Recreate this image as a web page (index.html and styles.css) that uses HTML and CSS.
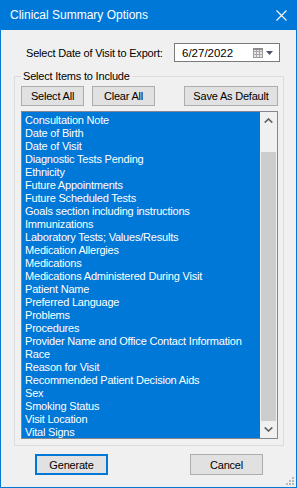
FILE: index.html
```html
<!DOCTYPE html>
<html lang="en">
  <head>
    <meta charset="UTF-8" />
    <title>Clinical Summary Options</title>
    <link rel="stylesheet" href="styles.css">
  </head>
  <body>
    <div class="dialog">
      <div class="titlebar">
        <span class="title">Clinical Summary Options</span>
        <svg class="close" width="11" height="11" viewBox="0 0 11 11">
          <path d="M0.5 0.5 L10.5 10.5 M10.5 0.5 L0.5 10.5" stroke="#fff" stroke-width="1.1" fill="none" />
        </svg>
      </div>

      <div class="content">
        <div class="date-row">
          <label for="visit-date">Select Date of Visit to Export:</label>
          <div class="date-box" id="visit-date">
            <span class="date-text">6/27/2022</span>
            <svg class="cal-icon" width="10" height="10" viewBox="0 0 10 10">
              <rect x="0.5" y="0.5" width="9" height="9" fill="#e8e8e8" stroke="#9a9a9a" />
              <path d="M0 3.5 H10 M0 6.5 H10 M3.5 1 V10 M6.5 1 V10" stroke="#a8a8a8" fill="none" />
              <rect x="0" y="0" width="10" height="2" fill="#8c8c8c" />
            </svg>
            <svg class="drop-arrow" width="7" height="4" viewBox="0 0 7 4">
              <path d="M0 0 H7 L3.5 4 Z" fill="#4c5466" />
            </svg>
          </div>
        </div>

        <fieldset class="group">
          <legend>Select Items to Include</legend>
          <div class="group-buttons">
            <button class="btn btn-small">Select All</button>
            <button class="btn btn-small">Clear All</button>
            <button class="btn btn-default">Save As Default</button>
          </div>

          <div class="listbox">
            <ul class="items">
              <li>Consultation Note</li>
              <li>Date of Birth</li>
              <li>Date of Visit</li>
              <li>Diagnostic Tests Pending</li>
              <li>Ethnicity</li>
              <li>Future Appointments</li>
              <li>Future Scheduled Tests</li>
              <li>Goals section including instructions</li>
              <li>Immunizations</li>
              <li>Laboratory Tests; Values/Results</li>
              <li>Medication Allergies</li>
              <li>Medications</li>
              <li>Medications Administered During Visit</li>
              <li>Patient Name</li>
              <li>Preferred Language</li>
              <li>Problems</li>
              <li>Procedures</li>
              <li>Provider Name and Office Contact Information</li>
              <li>Race</li>
              <li>Reason for Visit</li>
              <li>Recommended Patient Decision Aids</li>
              <li>Sex</li>
              <li>Smoking Status</li>
              <li>Visit Location</li>
              <li>Vital Signs</li>
            </ul>
            <div class="scrollbar">
              <div class="scroll-arrow">
                <svg width="9" height="5" viewBox="0 0 9 5">
                  <path d="M0.7 4.6 L4.5 1 L8.3 4.6" stroke="#606060" stroke-width="1.6" fill="none" />
                </svg>
              </div>
              <div class="scroll-track">
                <div class="scroll-thumb"></div>
              </div>
              <div class="scroll-arrow">
                <svg width="9" height="5" viewBox="0 0 9 5">
                  <path d="M0.7 0.4 L4.5 4 L8.3 0.4" stroke="#606060" stroke-width="1.6" fill="none" />
                </svg>
              </div>
            </div>
          </div>
        </fieldset>

        <div class="footer">
          <button class="btn btn-footer btn-focused">Generate</button>
          <button class="btn btn-footer">Cancel</button>
        </div>
      </div>

      <div class="grip">
        <span></span>
        <span></span><span></span>
        <span></span><span></span><span></span>
      </div>
    </div>
  </body>
</html>
```

FILE: styles.css
```css
html,
body {
  margin: 0;
  padding: 0;
  background: #f0f0f0;
}

body {
  font-family: "Liberation Sans", Arial, sans-serif;
  font-size: 11px;
  color: #000;
}

.dialog {
  position: relative;
  box-sizing: border-box;
  width: 297px;
  height: 488px;
  border: 1px solid #0078d7;
  border-top: none;
  background: #f0f0f0;
  display: flex;
  flex-direction: column;
}

.titlebar {
  height: 30px;
  flex: none;
  background: #0078d7;
  color: #fff;
  display: flex;
  align-items: center;
  justify-content: space-between;
  padding: 0 9px 0 9px;
}

.title {
  font-size: 12px;
}

.close {
  display: block;
}

.content {
  display: flex;
  flex-direction: column;
}

.date-row {
  display: flex;
  align-items: center;
  justify-content: space-between;
  padding: 13px 16px 0 25px;
  letter-spacing: -0.2px;
}

.date-box {
  box-sizing: border-box;
  width: 106px;
  height: 19px;
  background: #fff;
  border: 1px solid #7a7a7a;
  display: flex;
  align-items: center;
  padding: 0 6px 0 7px;
  letter-spacing: 0;
}

.date-text {
  font-size: 11.5px;
  flex: 1;
}

.cal-icon {
  display: block;
  margin-right: 3px;
}

.drop-arrow {
  display: block;
}

.group {
  box-sizing: border-box;
  width: 270px;
  margin: 8px 0 0 13px;
  padding: 3px 5px 6px 6px;
  border: 1px solid #dcdcdc;
  min-width: 0;
}

.group legend {
  padding: 0 2px;
  letter-spacing: -0.2px;
  line-height: 13px;
}

.group-buttons {
  display: flex;
}

.btn {
  box-sizing: border-box;
  height: 20px;
  margin: 0;
  padding: 0;
  background: #e1e1e1;
  border: 1px solid #adadad;
  font-family: "Liberation Sans", Arial, sans-serif;
  font-size: 11px;
  letter-spacing: -0.2px;
  color: #000;
}

.btn-small {
  width: 63px;
}

.btn-small + .btn-small {
  margin-left: 8px;
}

.btn-default {
  width: 94px;
  margin-left: auto;
}

.listbox {
  box-sizing: border-box;
  height: 328px;
  margin-top: 5px;
  border: 1px solid #828790;
  background: #fff;
  display: flex;
}

.items {
  flex: 1;
  list-style: none;
  margin: 0;
  padding: 2px 0 0 3px;
  overflow: hidden;
  background: #0078d7;
  color: #fff;
  letter-spacing: -0.2px;
}

.items li {
  height: 13px;
  line-height: 13px;
  white-space: nowrap;
}

.scrollbar {
  width: 17px;
  background: #f0f0f0;
  display: flex;
  flex-direction: column;
}

.scroll-arrow {
  height: 17px;
  display: flex;
  align-items: center;
  justify-content: center;
}

.scroll-track {
  flex: 1;
  display: flex;
  flex-direction: column;
  justify-content: flex-end;
}

.scroll-thumb {
  height: 269px;
  margin: 0 1px;
  background: #cdcdcd;
}

.footer {
  display: flex;
  justify-content: space-between;
  padding: 8px 33px 0 34px;
}

.btn-footer {
  width: 73px;
  height: 21px;
}

.btn-focused {
  border: 2px solid #0078d7;
}

.grip {
  position: absolute;
  right: 2px;
  bottom: 2px;
  width: 8px;
  height: 8px;
  display: grid;
  grid-template-columns: repeat(3, 2px);
  grid-template-rows: repeat(3, 2px);
  gap: 1px;
}

.grip span {
  background: #b9b9b9;
}

.grip span:nth-child(1) {
  grid-column: 3;
  grid-row: 1;
}

.grip span:nth-child(2) {
  grid-column: 2;
  grid-row: 2;
}

.grip span:nth-child(3) {
  grid-column: 3;
  grid-row: 2;
}

.grip span:nth-child(4) {
  grid-column: 1;
  grid-row: 3;
}

.grip span:nth-child(5) {
  grid-column: 2;
  grid-row: 3;
}

.grip span:nth-child(6) {
  grid-column: 3;
  grid-row: 3;
}
```
